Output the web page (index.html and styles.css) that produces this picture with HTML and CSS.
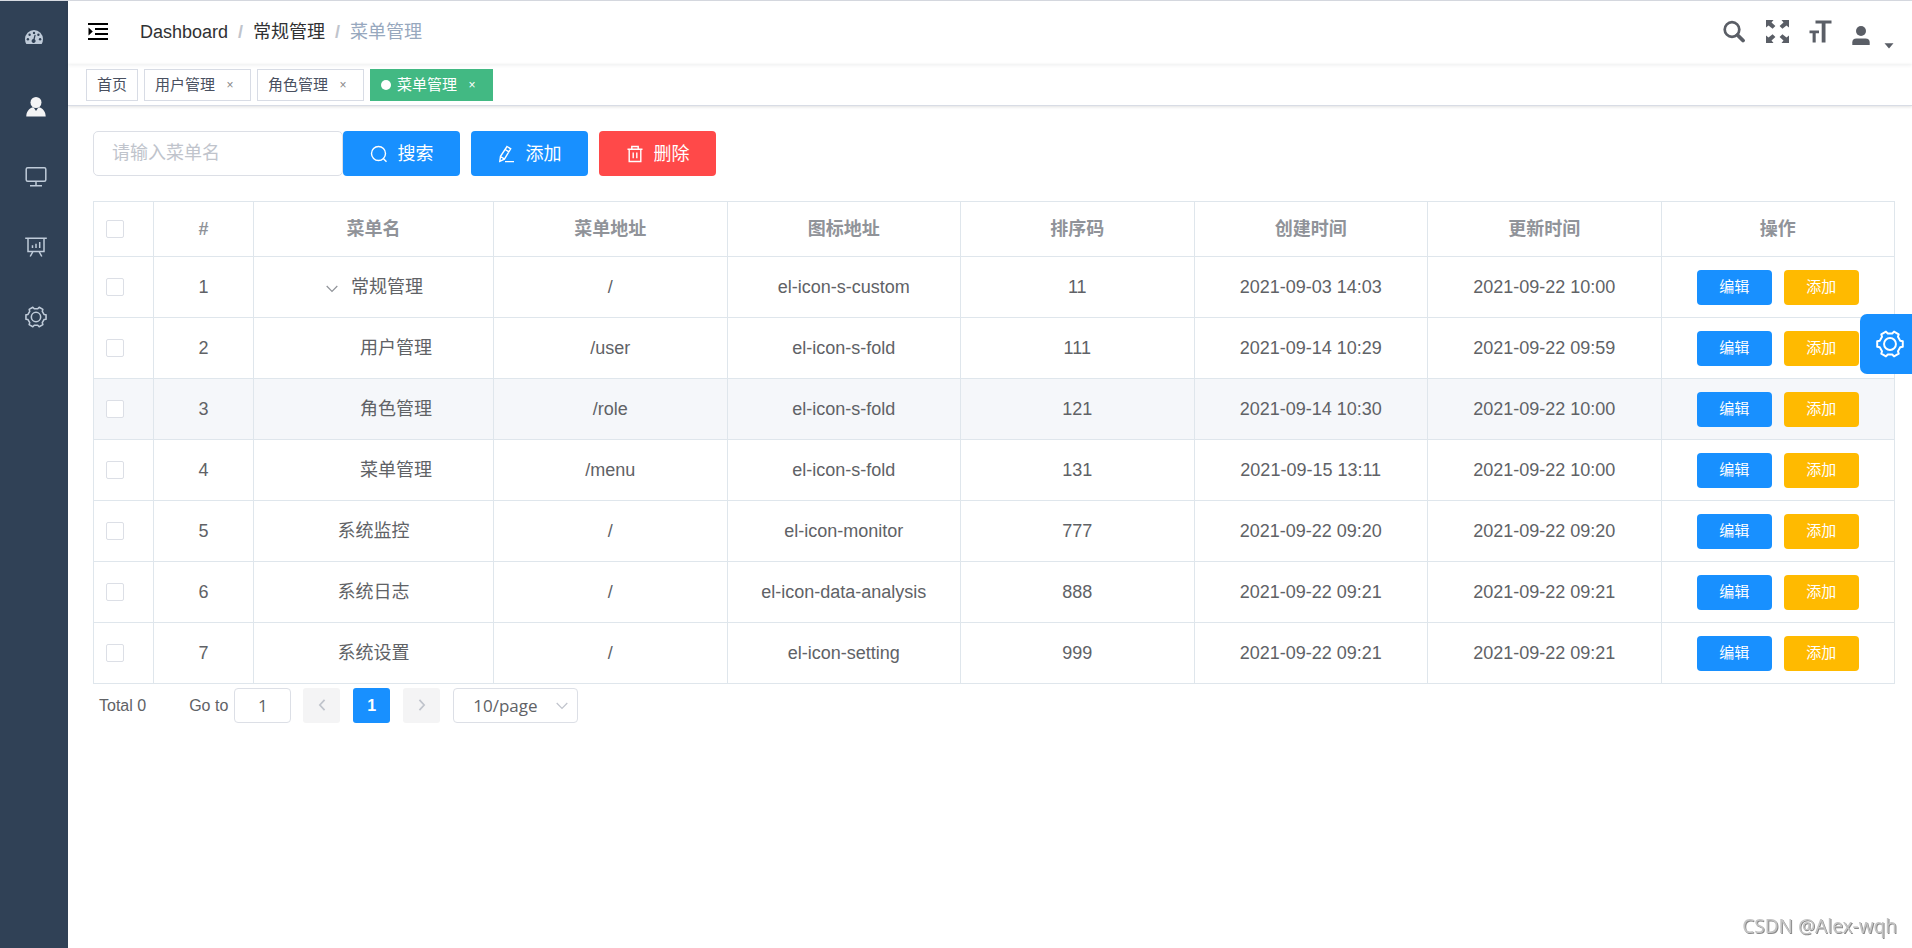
FILE: index.html
```html
<!DOCTYPE html>
<html lang="zh-CN">
<head>
<meta charset="utf-8">
<title>菜单管理</title>
<link rel="stylesheet" href="styles.css">
</head>
<body>
<svg class="sprite" aria-hidden="true">
  <symbol id="i-gear" viewBox="0 0 24 24"><path d="M22.960 14.330L20.750 14.840 18.840 18.160 19.490 20.320 15.460 22.650 13.910 21H10.090L8.540 22.650 4.510 20.320 5.160 18.160 3.250 14.840 1.040 14.330V9.670L3.250 9.160 5.160 5.840 4.510 3.680 8.540 1.350 10.090 3H13.910L15.460 1.350 19.490 3.680 18.840 5.840 20.750 9.160 22.960 9.670Z" fill="none" stroke="currentColor" stroke-width="1.700" stroke-linejoin="round"/><circle cx="12" cy="12" r="5.100" fill="none" stroke="currentColor" stroke-width="1.700"/></symbol>
</svg>
<div class="app">
  <nav class="sidebar" aria-label="主菜单">
    <a class="side-link" href="#" aria-label="Dashboard"><svg class="ico-dash" viewBox="0 0 18 14"><path d="M0 9a9 9 0 0 1 18 0q0 2.600-1.300 5H1.300Q0 11.600 0 9Z" fill="currentColor"/><g fill="#304156"><circle cx="2.900" cy="9.300" r="1.200"/><circle cx="4.600" cy="4.800" r="1.200"/><circle cx="9" cy="2.900" r="1.200"/><circle cx="13.400" cy="4.800" r="1.200"/><circle cx="15.100" cy="9.300" r="1.200"/><path d="M9.600 4.800l1.100.3-1 4.200a2 2 0 1 1-1.300-.3z"/></g></svg></a>
    <a class="side-link active" href="#" aria-label="常规管理"><svg viewBox="0 0 22 22"><circle cx="11" cy="6.500" r="5.500" fill="currentColor"/><path d="M1.300 20.500c0-4.600 2.400-8 6.700-9.300l1 .8 2 3 2-3 1-.8c4.300 1.300 6.700 4.700 6.700 9.300z" fill="currentColor"/></svg></a>
    <a class="side-link" href="#" aria-label="系统监控"><svg viewBox="0 0 22 22" fill="none" stroke="currentColor" stroke-width="1.500"><rect x="1.200" y="1.700" width="19.600" height="13.600" rx="1.500"/><path d="M11 15.300v4M5 19.700h12"/></svg></a>
    <a class="side-link" href="#" aria-label="系统日志"><svg viewBox="0 0 22 22" fill="none" stroke="currentColor" stroke-width="1.500"><path d="M.2 2.200h21.600M3 2.200v13.300h16V2.200M8 15.500l-2.800 5M14 15.500l2.800 5M7.500 12V9.300M11 12V7.800M14.700 12V6"/></svg></a>
    <a class="side-link" href="#" aria-label="系统设置"><svg><use href="#i-gear"/></svg></a>
  </nav>
  <div class="main">
    <header class="navbar">
      <button class="icon-btn burger" type="button" aria-label="折叠菜单"><svg viewBox="0 0 20 18" width="20" height="18"><path d="M0 0h20v2H0zM7 5h13v2H7zM7 10h13v2H7zM0 15h20v2H0zM.5 4.400l4.300 4.100-4.300 4.100z" fill="#000"/></svg></button>
      <nav class="crumbs" aria-label="面包屑">
        <a href="#">Dashboard</a><span class="sep">/</span><a href="#">常规管理</a><span class="sep">/</span><span class="current">菜单管理</span>
      </nav>
      <div class="tools">
        <button class="icon-btn" type="button" aria-label="搜索"><svg viewBox="0 0 23 23" width="23" height="23" fill="none" stroke="currentColor"><circle cx="9" cy="9.500" r="7.300" stroke-width="2.700"/><path d="M14.500 15l5.500 5.500" stroke-width="3.800" stroke-linecap="round"/></svg></button>
        <button class="icon-btn" type="button" aria-label="全屏"><svg viewBox="0 0 23 23" width="23" height="23" fill="currentColor"><path id="fs" d="M0 0h7.500L5.500 2.400 9.400 6 6.600 8.700 2.500 5.400 0 7.500z"/><use href="#fs" transform="matrix(-1 0 0 1 23 0)"/><use href="#fs" transform="matrix(1 0 0 -1 0 23)"/><use href="#fs" transform="matrix(-1 0 0 -1 23 23)"/></svg></button>
        <button class="icon-btn" type="button" aria-label="字体大小"><svg viewBox="0 0 23 23" width="23" height="23" fill="currentColor"><path d="M6.500.5H22.500v3H16.500v19h-3.800v-19H6.500zM.5 10.500h9.500v2.700H6.700v9.300H3.600v-9.300H.5z"/></svg></button>
        <button class="icon-btn user" type="button" aria-label="用户"><svg viewBox="0 0 18 20" width="18" height="20" fill="currentColor"><circle cx="9" cy="5" r="5"/><path d="M.3 19v-2.500q0-4 4.200-4h9q4.200 0 4.200 4V19z"/></svg><svg class="caret" viewBox="0 0 10 6" width="10" height="6" fill="currentColor"><path d="M.5.3h9L5 5.500z"/></svg></button>
      </div>
    </header>
    <div class="tags">
      <a class="tag" href="#">首页</a>
      <span class="tag"><a href="#">用户管理</a><button type="button" aria-label="关闭">×</button></span>
      <span class="tag"><a href="#">角色管理</a><button type="button" aria-label="关闭">×</button></span>
      <span class="tag on"><a href="#">菜单管理</a><button type="button" aria-label="关闭">×</button></span>
    </div>
    <main class="content">
      <form class="search">
        <input class="query" type="text" placeholder="请输入菜单名" aria-label="菜单名">
        <button class="btn primary" type="button"><svg viewBox="0 0 18 18"><circle cx="8.500" cy="8.500" r="7"/><path d="M13.500 13.800l3 3"/></svg>搜索</button>
        <button class="btn primary" type="button"><svg viewBox="0 0 18 18"><path d="M9 1.500l3.700 2.300-6.300 10.300-4.600 2.300.700-5.100zM7.200 4.500l3.700 2.300M2.500 11.500l3.700 2.300M7 16.600h9"/></svg>添加</button>
        <button class="btn danger" type="button"><svg viewBox="0 0 18 18"><path d="M1.500 4.200h15M5.800 4V1.500h6.400V4M3.200 4.200v12.300h11.600V4.200M7.200 7.500v5.800M10.800 7.500v5.800"/></svg>删除</button>
      </form>
      <table class="grid">
        <colgroup><col class="c-check"><col class="c-no"><col class="c-name"><col><col><col><col><col><col></colgroup>
        <thead><tr><th><input type="checkbox" aria-label="全选"></th><th>#</th><th>菜单名</th><th>菜单地址</th><th>图标地址</th><th>排序码</th><th>创建时间</th><th>更新时间</th><th>操作</th></tr></thead>
        <tbody>
        <tr><td><input type="checkbox" aria-label="选择 1"></td><td>1</td><td><button class="expand" type="button" aria-label="收起"><svg viewBox="0 0 12 8" width="12" height="8"><path d="M.7 1l5.300 5.500L11.300 1"/></svg></button>常规管理</td><td>/</td><td>el-icon-s-custom</td><td>11</td><td>2021-09-03 14:03</td><td>2021-09-22 10:00</td><td><div class="ops"><button class="mini primary" type="button">编辑</button><button class="mini warn" type="button">添加</button></div></td></tr>
        <tr><td><input type="checkbox" aria-label="选择 2"></td><td>2</td><td class="child">用户管理</td><td>/user</td><td>el-icon-s-fold</td><td>111</td><td>2021-09-14 10:29</td><td>2021-09-22 09:59</td><td><div class="ops"><button class="mini primary" type="button">编辑</button><button class="mini warn" type="button">添加</button></div></td></tr>
        <tr class="hover"><td><input type="checkbox" aria-label="选择 3"></td><td>3</td><td class="child">角色管理</td><td>/role</td><td>el-icon-s-fold</td><td>121</td><td>2021-09-14 10:30</td><td>2021-09-22 10:00</td><td><div class="ops"><button class="mini primary" type="button">编辑</button><button class="mini warn" type="button">添加</button></div></td></tr>
        <tr><td><input type="checkbox" aria-label="选择 4"></td><td>4</td><td class="child">菜单管理</td><td>/menu</td><td>el-icon-s-fold</td><td>131</td><td>2021-09-15 13:11</td><td>2021-09-22 10:00</td><td><div class="ops"><button class="mini primary" type="button">编辑</button><button class="mini warn" type="button">添加</button></div></td></tr>
        <tr><td><input type="checkbox" aria-label="选择 5"></td><td>5</td><td>系统监控</td><td>/</td><td>el-icon-monitor</td><td>777</td><td>2021-09-22 09:20</td><td>2021-09-22 09:20</td><td><div class="ops"><button class="mini primary" type="button">编辑</button><button class="mini warn" type="button">添加</button></div></td></tr>
        <tr><td><input type="checkbox" aria-label="选择 6"></td><td>6</td><td>系统日志</td><td>/</td><td>el-icon-data-analysis</td><td>888</td><td>2021-09-22 09:21</td><td>2021-09-22 09:21</td><td><div class="ops"><button class="mini primary" type="button">编辑</button><button class="mini warn" type="button">添加</button></div></td></tr>
        <tr><td><input type="checkbox" aria-label="选择 7"></td><td>7</td><td>系统设置</td><td>/</td><td>el-icon-setting</td><td>999</td><td>2021-09-22 09:21</td><td>2021-09-22 09:21</td><td><div class="ops"><button class="mini primary" type="button">编辑</button><button class="mini warn" type="button">添加</button></div></td></tr>
        </tbody>
      </table>
      <div class="pager">
        <span class="total">Total 0</span>
        <label class="jump">Go to<input type="text" value="1"></label>
        <button class="page" type="button" disabled aria-label="上一页"><svg viewBox="0 0 8 14" width="8" height="12"><path d="M7 1L1.500 7 7 13"/></svg></button>
        <button class="page on" type="button">1</button>
        <button class="page" type="button" disabled aria-label="下一页"><svg viewBox="0 0 8 14" width="8" height="12"><path d="M1 1l5.500 6L1 13"/></svg></button>
        <div class="size"><select aria-label="每页条数"><option>10/page</option></select><svg viewBox="0 0 12 8" width="12" height="8"><path d="M.7 1l5.300 5.500L11.300 1"/></svg></div>
      </div>
    </main>
  </div>
</div>
<button class="settings" type="button" aria-label="设置"><svg><use href="#i-gear"/></svg></button>
<div class="mark">CSDN @Alex-wqh</div>
</body>
</html>
```
FILE: styles.css
```css
* { box-sizing: border-box; }
body {
  margin: 0;
  background: #fff;
  color: #606266;
  font: 18px/24px "Liberation Sans", "Noto Sans CJK SC", sans-serif;
}
button, input, select { font: inherit; color: inherit; margin: 0; }
button { cursor: pointer; border: 0; padding: 0; background: none; }
a { color: inherit; text-decoration: none; }
.sprite { position: absolute; width: 0; height: 0; }
.app { display: flex; min-height: 100vh; border-top: 1px solid #d8dbe2; }

.sidebar { width: 68px; flex: none; padding-top: 1px; background: #304156; color: #bfcbd9; }
.side-link { display: flex; align-items: center; height: 70px; padding-left: 25px; }
.side-link svg { width: 22px; height: 22px; }
.side-link .ico-dash { width: 18px; height: 14px; }
.side-link.active { color: #f4f4f5; }

.main { flex: 1; min-width: 0; }
.navbar {
  display: flex;
  align-items: center;
  height: 63px;
  padding: 0 18px 2px 20px;
  box-shadow: 0 1px 4px rgba(0, 21, 41, .08);
}
.icon-btn svg { display: block; }
.crumbs { display: flex; padding-left: 32px; color: #303133; }
.crumbs .sep { color: #c0c4cc; padding: 0 10px; font-weight: bold; }
.crumbs .current { color: #97a8be; }
.tools { display: flex; gap: 20px; margin-left: auto; color: #5a5e66; }
.user { display: flex; align-items: flex-end; gap: 14px; padding-top: 8px; }
.user .caret { margin-bottom: -3px; }

.tags {
  display: flex;
  align-items: center;
  gap: 6px;
  height: 42px;
  padding: 0 18px;
  font-size: 15px;
  border-bottom: 1px solid #d8dce5;
  box-shadow: 0 1px 3px rgba(0, 0, 0, .12);
}
.tag {
  display: flex;
  align-items: center;
  height: 32px;
  padding: 0 10px;
  border: 1px solid #d8dce5;
  color: #495060;
}
.tag button { width: 20px; margin-left: 5px; font-size: 12px; color: #888; }
.tag.on { background: #42b983; border-color: #42b983; color: #fff; }
.tag.on button { color: #fff; }
.tag.on::before { content: ""; width: 10px; height: 10px; margin-right: 6px; border-radius: 50%; background: #fff; }

.content { padding: 25px 17px 25px 25px; }
.search { display: flex; }
.query {
  width: 250px;
  height: 45px;
  padding: 0 18px;
  border: 1px solid #dcdfe6;
  border-radius: 5px;
  outline: 0;
}
.query::placeholder { color: #c0c4cc; opacity: 1; }
.btn {
  display: flex;
  align-items: center;
  justify-content: center;
  gap: 10px;
  width: 117px;
  height: 45px;
  border-radius: 4px;
  color: #fff;
}
.btn + .btn { margin-left: 11px; }
.btn svg { width: 18px; height: 18px; fill: none; stroke: #fff; stroke-width: 1.400; }
.primary { background: #1890ff; }
.danger { background: #ff4949; }
.warn { background: #ffba00; }

.grid { width: 100%; margin-top: 25px; table-layout: fixed; border-collapse: collapse; }
.c-check { width: 60px; }
.c-no { width: 100px; }
.c-name { width: 240px; }
.grid th, .grid td { height: 61px; padding: 0; border: 1px solid #dfe6ec; text-align: center; }
.grid th { height: 55px; color: #909399; }
.grid tr > :first-child { text-align: left; padding-left: 12px; }
.grid .hover { background: #f5f7fa; }
.grid .child { padding-left: 45px; }
.grid input {
  appearance: none;
  display: block;
  width: 18px;
  height: 18px;
  border: 1px solid #dcdfe6;
  border-radius: 2px;
  background: #fff;
}
.expand { width: 25px; margin-left: 2px; text-align: left; }
.expand svg, .size svg, .page svg { fill: none; stroke: #909399; stroke-width: 1.200; }
.ops { display: flex; justify-content: center; gap: 12px; }
.mini { width: 75px; height: 35px; border-radius: 4px; color: #fff; font-size: 15px; }

.pager { display: flex; align-items: center; margin-top: 4px; padding-left: 6px; font-size: 16px; }
.jump { display: flex; align-items: center; gap: 6px; margin: 0 12px 0 43px; }
.jump input, .size select {
  height: 35px;
  border: 1px solid #dcdfe6;
  border-radius: 4px;
  background: #fff;
  font: 17px "Open Sans", sans-serif;
}
.jump input { width: 57px; padding: 0; text-align: center; }
.page { width: 37px; height: 35px; margin-right: 13px; border-radius: 3px; background: #f4f4f5; font-weight: bold; }
.page svg { stroke: #c0c4cc; stroke-width: 2; }
.page.on { background: #1890ff; color: #fff; }
.size { position: relative; }
.size select { appearance: none; width: 125px; padding: 0 19px; }
.size svg { position: absolute; right: 10px; top: 14px; stroke: #c0c4cc; pointer-events: none; }

.settings {
  position: fixed;
  right: 0;
  top: 314px;
  width: 52px;
  height: 60px;
  padding-left: 16px;
  border-radius: 7px 0 0 7px;
  background: #1890ff;
  color: #fff;
}
.settings svg { display: block; width: 28px; height: 28px; }
.mark {
  position: fixed;
  right: 15px;
  bottom: 9px;
  font: 19px/26px "Noto Sans", sans-serif;
  color: #c4c4c4;
  text-shadow: 1px 1px 0 #8c8c8c;
}
```
